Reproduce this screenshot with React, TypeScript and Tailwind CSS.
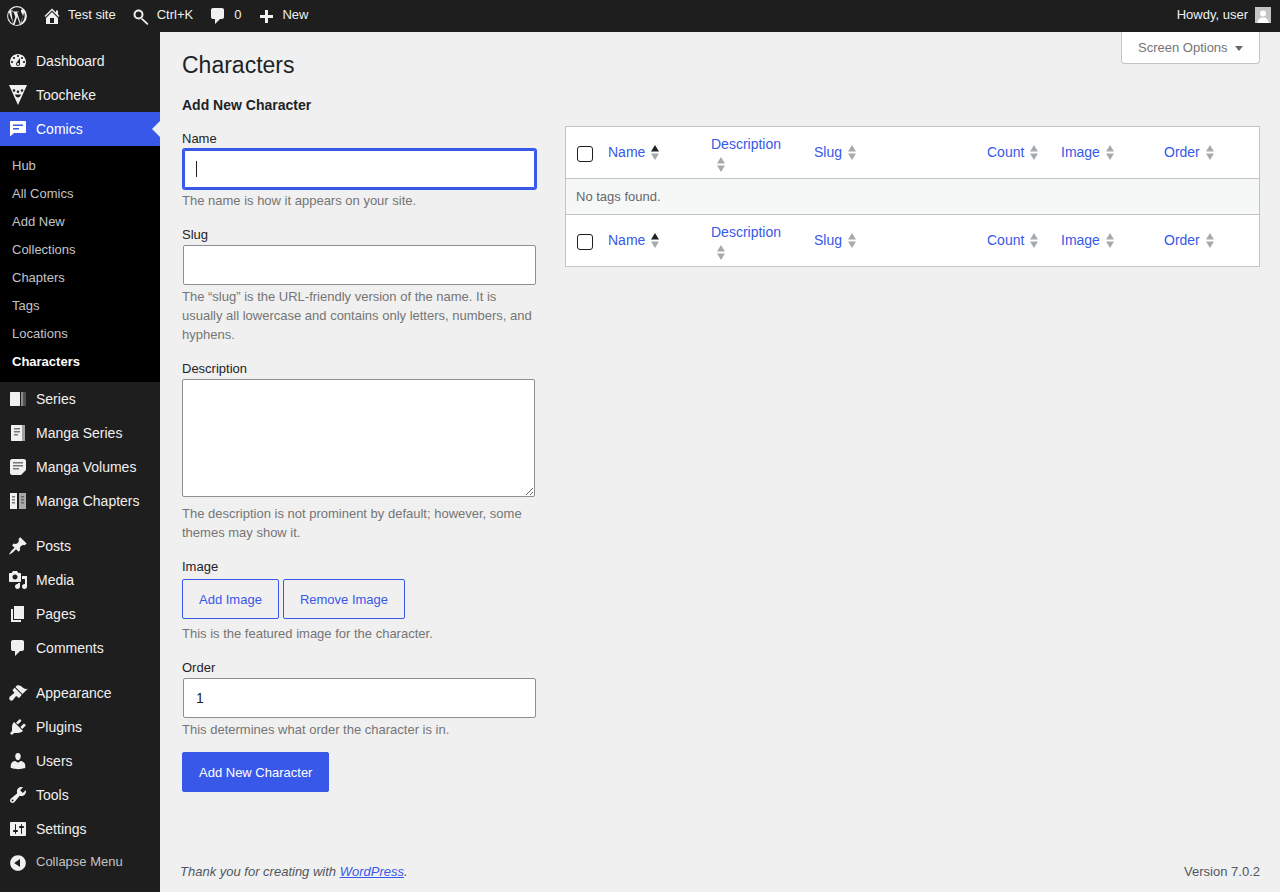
const icons: Record<string, string> = {
  dashboard:
    'M3.76 16h12.48c1.1-1.37 1.76-3.11 1.76-5 0-4.42-3.58-8-8-8s-8 3.58-8 8c0 1.89.66 3.63 1.76 5zM10 4c.55 0 1 .45 1 1s-.45 1-1 1-1-.45-1-1 .45-1 1-1zM6 6c.55 0 1 .45 1 1s-.45 1-1 1-1-.45-1-1 .45-1 1-1zm8 0c.55 0 1 .45 1 1s-.45 1-1 1-1-.45-1-1 .45-1 1-1zm-5.37 5.55L12 7v6c0 1.1-.9 2-2 2s-2-.9-2-2c0-.57.24-1.08.63-1.45zM4 10c.55 0 1 .45 1 1s-.45 1-1 1-1-.45-1-1 .45-1 1-1zm12 0c.55 0 1 .45 1 1s-.45 1-1 1-1-.45-1-1 .45-1 1-1zm-5 3c0-.55-.45-1-1-1s-1 .45-1 1 .45 1 1 1 1-.45 1-1z',
  toocheke:
    'M1 0h18l-9 20zM6 4.200a1.300 1.300 0 1 0 0 2.600 1.300 1.300 0 0 0 0-2.600zM14 4.200a1.300 1.300 0 1 0 0 2.600 1.300 1.300 0 0 0 0-2.600zM10 5.500c-.8 0-1.300.6-1.300 1.200S9.200 8 10 8s1.300-.7 1.300-1.300S10.800 5.500 10 5.500zM7 9.500c.5 1.800 1.700 3 3 3s2.500-1.200 3-3z',
  comics:
    'M3 2h14c.55 0 1 .45 1 1v10c0 .55-.45 1-1 1H6l-4 3.500V3c0-.55.45-1 1-1zM5 5.500v1.500h10V5.500zM5 9v1.500h6V9z',
  post: 'M10.44 3.02l1.82-1.82 6.36 6.35-1.83 1.82c-1.05-.68-2.48-.57-3.41.36l-.75.75c-.92.93-1.04 2.35-.35 3.41l-1.83 1.82-2.41-2.41-2.8 2.79c-.42.42-3.38 2.71-3.8 2.29s1.86-3.39 2.28-3.81l2.79-2.79L4.1 9.36l1.83-1.82c1.05.69 2.48.57 3.4-.36l.75-.75c.93-.92 1.05-2.35.36-3.41z',
  media:
    'M13 11V4c0-.55-.45-1-1-1h-1.67L9 1H5L3.67 3H2c-.55 0-1 .45-1 1v7c0 .55.45 1 1 1h10c.55 0 1-.45 1-1zM7 4.500c1.380 0 2.500 1.120 2.500 2.500S8.380 9.500 7 9.500 4.500 8.380 4.500 7 5.620 4.500 7 4.500zM14 6h5v10.500c0 1.380-1.120 2.500-2.500 2.500S14 17.880 14 16.500s1.120-2.500 2.500-2.500c.17 0 .34.02.5.05V9h-3V6zm-4 8.050V13h2v3.500c0 1.380-1.120 2.500-2.500 2.500S7 17.880 7 16.500 8.120 14 9.500 14c.17 0 .34.02.5.05z',
  page: 'M6 15V2h10v13H6zm-1 1h8v2H3V5h2v11z',
  comment:
    'M5 2h9c1.100 0 2 .9 2 2v7c0 1.100-.9 2-2 2h-2l-5 5v-5H5c-1.100 0-2-.9-2-2V4c0-1.100.9-2 2-2z',
  appearance:
    'M14.480 11.060L7.410 3.990l1.500-1.500c.5-.56 2.300-.47 3.510.32 1.210.8 1.430 1.280 2.910 2.100 1.180.64 2.450 1.260 4.450.85zm-.71.71L6.700 4.700 4.930 6.470c-.39.39-.39 1.020 0 1.410l1.060 1.060c.39.39.39 1.030 0 1.420-.6.6-1.430 1.110-2.210 1.690-.35.26-.7.53-1.010.84C1.430 13.230.910 15 1.530 16.500c.62 1.500 2.380 1.500 3.620.25.31-.31.58-.66.84-1.010.58-.78 1.090-1.610 1.690-2.210.39-.39 1.020-.39 1.410 0l1.060 1.060c.39.39 1.020.39 1.410 0z',
  plugins:
    'M13.110 4.360L9.870 7.600 8 5.730l3.240-3.240c.35-.34 1.050-.2 1.560.32.52.51.66 1.210.31 1.550zm-8 1.770l.91-1.120 9.010 9.010-1.190.84c-.71.71-2.630 1.160-3.820 1.160H6.140L4.900 17.260c-.59.59-1.540.59-2.120 0-.59-.58-.59-1.530 0-2.120l1.240-1.240v-3.880c0-1.130.4-3.190 1.090-3.890zm7.260 3.970l3.240-3.240c.34-.35 1.040-.21 1.550.31.52.51.66 1.210.31 1.550l-3.240 3.250z',
  users:
    'M10 9.250c-2.270 0-2.730-3.440-2.730-3.440C7 4.020 7.820 2 9.970 2c2.160 0 2.980 2.020 2.710 3.810 0 0-.41 3.440-2.680 3.440zm0 2.570L12.720 10c2.390 0 4.520 2.330 4.520 4.530v2.490s-3.650 1.130-7.240 1.130c-3.650 0-7.240-1.130-7.240-1.130v-2.490c0-2.250 1.940-4.480 4.470-4.480z',
  tools:
    'M16.680 9.770c-1.340 1.340-3.300 1.670-4.950.99l-5.410 6.520c-.99.99-2.590.99-3.580 0s-.99-2.590 0-3.570l6.520-5.420c-.68-1.650-.35-3.610.99-4.950 1.280-1.280 3.120-1.620 4.720-1.060l-2.890 2.890 2.820 2.820 2.860-2.870c.53 1.580.18 3.390-1.080 4.650zM3.810 16.210c.4.39 1.040.39 1.430 0 .4-.4.4-1.040 0-1.430-.39-.4-1.030-.4-1.430 0-.39.39-.39 1.030 0 1.430z',
  settings:
    'M18 16V4c0-.55-.45-1-1-1H3c-.55 0-1 .45-1 1v12c0 .55.45 1 1 1h14c.55 0 1-.45 1-1zM8 11h1c.55 0 1 .45 1 1s-.45 1-1 1H8v1.500c0 .28-.22.5-.5.5s-.5-.22-.5-.5V13H6c-.55 0-1-.45-1-1s.45-1 1-1h1V5.500c0-.28.22-.5.5-.5s.5.22.5.5V11zm5-2h-1c-.55 0-1-.45-1-1s.45-1 1-1h1V5.500c0-.28.22-.5.5-.5s.5.22.5.5V7h1c.55 0 1 .45 1 1s-.45 1-1 1h-1v5.500c0 .28-.22.5-.5.5s-.5-.22-.5-.5V9z',
  collapse:
    'M10 2.160c4.330 0 7.840 3.510 7.840 7.840s-3.510 7.840-7.840 7.840S2.160 14.330 2.160 10 5.710 2.160 10 2.160zm2 11.720V6.120L6.180 9.970z',
  home: 'M16 8.500l1.530 1.530-1.060 1.060L10 4.620l-6.470 6.470-1.060-1.060L10 2.500l4 4v-2h2v4zm-6-2.460l6 5.990V18H4v-5.970zM12 17v-5H8v5h4z',
  plus: 'M17 7v3h-5v5H9v-5H4V7h5V2h3v5h5z',
  search:
    'M7.500 3.500a5 5 0 1 1 0 10 5 5 0 0 1 0-10zm0 2a3 3 0 1 0 0 6 3 3 0 0 0 0-6zM11.300 12l5.700 5.200c.4.4.4 1 0 1.300-.4.4-.9.4-1.300 0l-5.600-5.200z',
  wp: 'M10 1a9 9 0 1 0 0 18 9 9 0 0 0 0-18zm0 1c1.900 0 3.700.7 5.100 1.800-.9 0-1.600.8-1.600 1.700 0 .8.500 1.500 1 2.300.4.700.8 1.500.8 2.800 0 .9-.3 1.900-.8 3.300l-1 3.300-3.500-10.500c.6 0 1.100-.1 1.100-.1.500-.1.500-.8 0-.8 0 0-1.600.1-2.600.1s-2.500-.1-2.500-.1c-.5 0-.6.800 0 .800 0 0 .5.100 1 .100l1.500 4.200-2.100 6.400L4.900 5.800c.6 0 1.100-.1 1.100-.1.500-.1.500-.8 0-.8 0 0-1.200.1-2 .1C5.400 3.200 7.600 2 10 2zM2.700 6.700l3.900 10.600A8 8 0 0 1 2.700 6.700zm7.400 4l2.500 6.900A8 8 0 0 1 7.800 18zm6.500-3.700c.3.900.4 1.900.4 3 0 2.900-1.600 5.500-3.900 6.900l2.500-7.100c.5-1.200.7-2.100.7-2.900z',
}

function Icon({ name, className = '' }: { name: string; className?: string }) {
  return (
    <svg viewBox="0 0 20 20" className={`w-5 h-5 shrink-0 fill-current ${className}`}>
      <path fillRule="evenodd" d={icons[name]} />
    </svg>
  )
}

function SeriesIcon() {
  return (
    <svg viewBox="0 0 20 20" className="w-5 h-5 shrink-0">
      <rect x="2" y="3" width="10" height="14" rx="0.5" fill="#f0f0f0" />
      <rect x="13" y="3" width="2.500" height="14" fill="#8a8a8a" />
      <rect x="16" y="3" width="2" height="14" fill="#4e4e4e" />
    </svg>
  )
}

function MangaSeriesIcon() {
  return (
    <svg viewBox="0 0 20 20" className="w-5 h-5 shrink-0">
      <path d="M3.500 2H14v16H3.500c-.3 0-.5-.2-.5-.5v-15c0-.3.2-.5.5-.5z" fill="#f0f0f0" />
      <rect x="14" y="2" width="3" height="16" fill="#a0a0a0" />
      <rect x="6" y="5" width="6" height="1.500" fill="#777" />
      <rect x="6" y="8" width="6" height="1.500" fill="#777" />
      <rect x="6" y="11" width="4" height="1.500" fill="#777" />
    </svg>
  )
}

function MangaVolumesIcon() {
  return (
    <svg viewBox="0 0 20 20" className="w-5 h-5 shrink-0">
      <path d="M4 2h12c1 0 2 1 2 2v9l-5 5H4c-1 0-2-1-2-2V4c0-1 1-2 2-2z" fill="#f0f0f0" />
      <rect x="5" y="5" width="10" height="1.500" fill="#777" />
      <rect x="5" y="8" width="10" height="1.500" fill="#777" />
      <rect x="5" y="11" width="6" height="1.500" fill="#777" />
    </svg>
  )
}

function MangaChaptersIcon() {
  return (
    <svg viewBox="0 0 20 20" className="w-5 h-5 shrink-0">
      <rect x="2" y="2" width="7" height="16" fill="#f0f0f0" />
      <rect x="11" y="2" width="7" height="16" fill="#a8a8a8" />
      <rect x="4" y="5" width="3" height="1.500" fill="#777" />
      <rect x="4" y="8" width="3" height="1.500" fill="#777" />
      <rect x="4" y="11" width="3" height="1.500" fill="#777" />
      <rect x="13" y="5" width="3" height="1.500" fill="#666" />
      <rect x="13" y="8" width="3" height="1.500" fill="#666" />
      <rect x="13" y="11" width="3" height="1.500" fill="#666" />
    </svg>
  )
}

function MenuItem({ icon, custom, label, active }: { icon?: string; custom?: React.ReactNode; label: string; active?: boolean }) {
  return (
    <div className={`relative flex items-center h-[34px] pl-2 gap-2 text-[14px] ${active ? 'bg-[#3858e9] text-white' : 'text-[#f0f0f0]'}`}>
      {custom ?? <Icon name={icon!} />}
      <span>{label}</span>
      {active && (
        <span className="absolute right-0 top-[9px] border-y-[8px] border-r-[8px] border-y-transparent border-r-[#f0f0f0]" />
      )}
    </div>
  )
}

const subItems = ['Hub', 'All Comics', 'Add New', 'Collections', 'Chapters', 'Tags', 'Locations', 'Characters']

function Sidebar() {
  return (
    <aside className="w-40 shrink-0 bg-[#1e1e1e] pt-3">
      <MenuItem icon="dashboard" label="Dashboard" />
      <MenuItem icon="toocheke" label="Toocheke" />
      <MenuItem icon="comics" label="Comics" active />
      <div className="bg-black pt-[6px] pb-[6px]">
        {subItems.map((s) => (
          <div
            key={s}
            className={`h-7 pl-3 flex items-center text-[13px] ${s === 'Characters' ? 'font-bold text-white' : 'text-[#c3c4c7]'}`}
          >
            {s}
          </div>
        ))}
      </div>
      <MenuItem custom={<SeriesIcon />} label="Series" />
      <MenuItem custom={<MangaSeriesIcon />} label="Manga Series" />
      <MenuItem custom={<MangaVolumesIcon />} label="Manga Volumes" />
      <MenuItem custom={<MangaChaptersIcon />} label="Manga Chapters" />
      <div className="h-[11px]" />
      <MenuItem icon="post" label="Posts" />
      <MenuItem icon="media" label="Media" />
      <MenuItem icon="page" label="Pages" />
      <MenuItem icon="comment" label="Comments" />
      <div className="h-[11px]" />
      <MenuItem icon="appearance" label="Appearance" />
      <MenuItem icon="plugins" label="Plugins" />
      <MenuItem icon="users" label="Users" />
      <MenuItem icon="tools" label="Tools" />
      <MenuItem icon="settings" label="Settings" />
      <div className="flex items-center h-[34px] pl-2 gap-2 text-[13px] text-[#c3c4c7]">
        <Icon name="collapse" className="text-[#f0f0f0]" />
        <span className="-mt-[2px]">Collapse Menu</span>
      </div>
    </aside>
  )
}

function TopBar() {
  return (
    <header className="h-8 shrink-0 bg-[#1e1e1e] text-[#f0f0f0] text-[13px] flex items-center justify-between pr-[9px]">
      <div className="flex items-center gap-[15px] pl-[7px]">
        <Icon name="wp" className="w-[22px] h-[22px] -ml-px -mr-px" />
        <div className="flex items-center gap-[6px]">
          <Icon name="home" />
          <span className="-mt-[2px]">Test site</span>
        </div>
        <div className="flex items-center gap-[6px]">
          <Icon name="search" />
          <span className="-mt-[2px]">Ctrl+K</span>
        </div>
        <div className="flex items-center gap-[6px]">
          <Icon name="comment" />
          <span className="-mt-[2px]">0</span>
        </div>
        <div className="flex items-center gap-[6px]">
          <Icon name="plus" className="mt-1" />
          <span className="-mt-[2px]">New</span>
        </div>
      </div>
      <div className="flex items-center gap-[7px]">
        <span className="-mt-[2px]">Howdy, user</span>
        <div className="w-4 h-4 mb-[2px] bg-[#c4c4c4] flex items-end justify-center overflow-hidden">
          <svg viewBox="0 0 16 16" className="w-4 h-4 fill-white">
            <circle cx="8" cy="6.500" r="3" />
            <path d="M2.500 16c0-3.500 2.500-5.500 5.500-5.500s5.500 2 5.500 5.500z" />
          </svg>
        </div>
      </div>
    </header>
  )
}

function Help({ children }: { children: React.ReactNode }) {
  return <p className="text-[13px] leading-[19px] text-[#757575]">{children}</p>
}

function Label({ children, className = '' }: { children: React.ReactNode; className?: string }) {
  return <label className={`block text-[13px] leading-[19px] text-[#1d2327] ${className}`}>{children}</label>
}

function TagForm() {
  return (
    <form className="w-[353px] shrink-0 pt-[3px]">
      <Label>Name</Label>
      <div className="relative mt-px">
        <input
          readOnly
          className="block ml-px w-[353px] h-10 px-3 bg-white border border-[#3858e9] rounded-[2px] shadow-[0_0_0_1px_#3858e9,inset_0_0_0_1px_#3858e9] outline-none"
        />
        <span className="absolute left-[14px] top-3 w-px h-4 bg-[#1e1e1e]" />
      </div>
      <div className="mt-[2px]">
        <Help>The name is how it appears on your site.</Help>
      </div>

      <Label className="mt-[15px]">Slug</Label>
      <input readOnly className="block mt-px ml-px w-[353px] h-10 px-3 bg-white border border-[#8c8f94] rounded-[2px] outline-none" />
      <div className="mt-[2px]">
        <Help>
          The “slug” is the URL-friendly version of the name. It is usually all lowercase and contains only letters,
          numbers, and hyphens.
        </Help>
      </div>

      <Label className="mt-[15px]">Description</Label>
      <textarea readOnly className="block mt-px w-[353px] h-[118px] bg-white border border-[#8c8f94] rounded-[2px] outline-none" />
      <div className="mt-[7px]">
        <Help>The description is not prominent by default; however, some themes may show it.</Help>
      </div>

      <Label className="mt-[15px]">Image</Label>
      <div className="flex gap-1 mt-[3px]">
        <button type="button" className="h-10 px-4 pt-[2px] bg-transparent border border-[#3858e9] rounded-[2px] text-[13px] text-[#3858e9]">
          Add Image
        </button>
        <button type="button" className="h-10 px-4 pt-[2px] bg-transparent border border-[#3858e9] rounded-[2px] text-[13px] text-[#3858e9]">
          Remove Image
        </button>
      </div>
      <div className="mt-[5px]">
        <Help>This is the featured image for the character.</Help>
      </div>

      <Label className="mt-[15px]">Order</Label>
      <input
        readOnly
        value="1"
        className="block mt-px ml-px w-[353px] h-10 px-3 bg-white border border-[#8c8f94] rounded-[2px] text-[14px] text-[#1d2327] outline-none"
      />
      <div className="mt-[2px]">
        <Help>This determines what order the character is in.</Help>
      </div>

      <button type="button" className="mt-[13px] h-10 px-4 pt-[2px] bg-[#3858e9] border border-[#3858e9] rounded-[2px] text-[13px] text-white">
        Add New Character
      </button>
    </form>
  )
}

function SortArrows({ active }: { active?: boolean }) {
  return (
    <svg viewBox="0 0 10 16" className="w-[10px] h-4 my-[1.500px] ml-[5px] shrink-0">
      <path d="M5 1l4 6.500H1z" fill={active ? '#1d2327' : '#a7aaad'} />
      <path d="M5 16L1 9.500h8z" fill="#a7aaad" />
    </svg>
  )
}

const columns = [
  { label: 'Name', width: 'w-[103px]', active: true },
  { label: 'Description', width: 'w-[103px] pt-[4px]' },
  { label: 'Slug', width: 'w-[173px]' },
  { label: 'Count', width: 'w-[74px]' },
  { label: 'Image', width: 'w-[103px]' },
  { label: 'Order', width: 'w-[105px]' },
]

function HeaderRow({ className }: { className: string }) {
  return (
    <tr className={`bg-white ${className}`}>
      <th className="w-8 align-top pt-[19px] pl-[11px] text-left">
        <input type="checkbox" className="block appearance-none w-4 h-4 bg-white border border-[#1e1e1e] rounded-[3px]" />
      </th>
      {columns.map((c) => (
        <th key={c.label} className={`${c.width} px-[10px] font-normal text-left`}>
          <a className="flex flex-wrap items-center text-[14px] leading-[19px] text-[#3858e9]">
            <span>{c.label}</span>
            <SortArrows active={c.active} />
          </a>
        </th>
      ))}
    </tr>
  )
}

function TagTable() {
  return (
    <div className="flex-1 border border-[#c3c4c7]">
      <table className="w-full table-fixed">
        <thead>
          <HeaderRow className="h-[51px] border-b border-[#c3c4c7]" />
        </thead>
        <tbody>
          <tr className="h-9 bg-[#f6f7f7]">
            <td colSpan={7} className="pl-[10px] pt-[2px] text-[13px] text-[#646970]">
              No tags found.
            </td>
          </tr>
        </tbody>
        <tfoot>
          <HeaderRow className="h-[52px] border-t border-[#c3c4c7]" />
        </tfoot>
      </table>
    </div>
  )
}

export default function App() {
  return (
    <div className="min-h-screen flex flex-col bg-[#f0f0f0] font-['Liberation_Sans',Arial,sans-serif]">
      <TopBar />
      <div className="flex flex-1">
        <Sidebar />
        <main className="flex-1 flex flex-col pl-[22px] pr-5">
          <div className="flex justify-end h-0">
            <button
              type="button"
              className="flex items-center shrink-0 h-8 w-[139px] pl-4 gap-[7px] bg-white border border-t-0 border-[#c3c4c7] rounded-b-[4px] text-[13px] text-[#757575]"
            >
              Screen Options
              <span className="border-x-[4px] border-t-[5px] border-x-transparent border-t-[#646970] mt-[2px]" />
            </button>
          </div>
          <h1 className="mt-[18px] text-[23px] leading-[30px] text-[#1d2327]">Characters</h1>
          <h2 className="mt-4 text-[14px] leading-[19px] font-bold text-[#1d2327]">Add New Character</h2>
          <div className="flex gap-[30px] mt-[11px] items-start">
            <TagForm />
            <TagTable />
          </div>
          <footer className="mt-auto -ml-[2px] pb-[11px] flex justify-between text-[13px] leading-[19px] text-[#50575e]">
            <span className="italic">
              Thank you for creating with <a className="underline text-[#3858e9]">WordPress</a>.
            </span>
            <span>Version 7.0.2</span>
          </footer>
        </main>
      </div>
    </div>
  )
}
